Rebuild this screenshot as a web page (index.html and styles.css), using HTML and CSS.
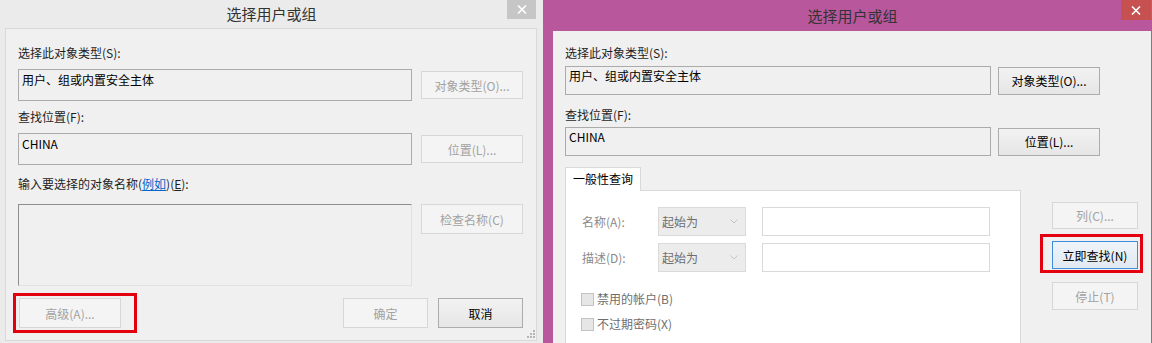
FILE: index.html
```html
<!DOCTYPE html>
<html lang="zh-CN">
<head>
    <meta charset="UTF-8">
    <meta name="viewport" content="width=device-width, initial-scale=1.0">
    <title>选择用户或组</title>
    <link rel="stylesheet" href="styles.css">
</head>
<body>
<div class="desk">
    <!-- inactive dialog -->
    <div class="win win-inactive">
        <div class="titlebar">
            <span class="title">选择用户或组</span>
            <span class="close"><svg width="10" height="9" viewBox="0 0 10 9"><path d="M1 0.5 L9 8.5 M9 0.5 L1 8.5" stroke="#fff" stroke-width="1.6" fill="none"/></svg></span>
        </div>
        <div class="client">
            <div class="label">选择此对象类型(S):</div>
            <div class="row">
                <div class="field">用户、组或内置安全主体</div>
                <button class="btn" disabled>对象类型(O)...</button>
            </div>
            <div class="label gap-8">查找位置(F):</div>
            <div class="row">
                <div class="field">CHINA</div>
                <button class="btn" disabled>位置(L)...</button>
            </div>
            <div class="label gap-11">输入要选择的对象名称(<a class="link" href="#">例如</a>)(<u>E</u>):</div>
            <div class="row row-top gap-12">
                <div class="names"></div>
                <button class="btn btn-tall" disabled>检查名称(C)</button>
            </div>
            <div class="row footer">
                <div class="mark mark-left">
                    <button class="btn btn-adv" disabled>高级(A)...</button>
                </div>
                <div class="spacer"></div>
                <button class="btn btn-sm" disabled>确定</button>
                <button class="btn btn-sm btn-on">取消</button>
            </div>
            <svg class="grip" width="9" height="9" viewBox="0 0 9 9" fill="#b5b5b5">
                <rect x="7" y="1" width="2" height="2"/>
                <rect x="4" y="4" width="2" height="2"/><rect x="7" y="4" width="2" height="2"/>
                <rect x="1" y="7" width="2" height="2"/><rect x="4" y="7" width="2" height="2"/><rect x="7" y="7" width="2" height="2"/>
            </svg>
        </div>
    </div>

    <!-- active dialog -->
    <div class="win win-active">
        <div class="titlebar titlebar-active">
            <span class="title">选择用户或组</span>
            <span class="close close-red"><svg width="10" height="9" viewBox="0 0 10 9"><path d="M1 0.5 L9 8.5 M9 0.5 L1 8.5" stroke="#fff" stroke-width="1.6" fill="none"/></svg></span>
        </div>
        <div class="client client-active">
            <div class="label label-tight">选择此对象类型(S):</div>
            <div class="row">
                <div class="field field-wide">用户、组或内置安全主体</div>
                <button class="btn btn-on">对象类型(O)...</button>
            </div>
            <div class="label gap-12">查找位置(F):</div>
            <div class="row gap-4">
                <div class="field field-wide">CHINA</div>
                <button class="btn btn-on">位置(L)...</button>
            </div>
            <div class="query">
                <div class="tabs">
                    <div class="tab">一般性查询</div>
                    <div class="panel">
                        <div class="qrow">
                            <span class="qlabel">名称(A):</span>
                            <div class="combo">起始为<svg width="8" height="5" viewBox="0 0 8 5"><path d="M0.5 0.5 L4 4 L7.5 0.5" stroke="#c4c4c4" fill="none"/></svg></div>
                            <div class="qinput"></div>
                        </div>
                        <div class="qrow gap-7">
                            <span class="qlabel">描述(D):</span>
                            <div class="combo">起始为<svg width="8" height="5" viewBox="0 0 8 5"><path d="M0.5 0.5 L4 4 L7.5 0.5" stroke="#c4c4c4" fill="none"/></svg></div>
                            <div class="qinput"></div>
                        </div>
                        <div class="check gap-19"><span class="box"></span>禁用的帐户(B)</div>
                        <div class="check gap-9"><span class="box"></span>不过期密码(X)</div>
                    </div>
                </div>
                <div class="side">
                    <button class="btn btn-side" disabled>列(C)...</button>
                    <div class="mark mark-right">
                        <button class="btn btn-side btn-focus">立即查找(N)</button>
                    </div>
                    <button class="btn btn-side btn-stop" disabled>停止(T)</button>
                </div>
            </div>
        </div>
    </div>
</div>
</body>
</html>
```

FILE: styles.css
```css
* {
    box-sizing: border-box;
}
body {
    margin: 0;
    font-family: "Noto Sans CJK SC", "Noto Sans", sans-serif;
    font-size: 12px;
    color: #000;
    background: #f0f0f0;
}
.desk {
    display: flex;
    width: 1152px;
    height: 343px;
    overflow: hidden;
}
.win {
    display: flex;
    flex-direction: column;
    height: 343px;
}
.win-inactive {
    width: 543px;
    background: #ebebeb;
}
.win-active {
    width: 609px;
    background: #b8579b;
}
.titlebar {
    position: relative;
    flex-shrink: 0;
    height: 28px;
    display: flex;
    justify-content: center;
    align-items: center;
}
.titlebar-active {
    height: 31px;
    padding-left: 10px;
}
.title {
    font-size: 15px;
    line-height: 20px;
    color: #333;
}
.close {
    position: absolute;
    top: 0;
    right: 7px;
    width: 29px;
    height: 19px;
    background: #c6c6c6;
    display: flex;
    justify-content: center;
    align-items: center;
}
.close-red {
    right: 1px;
    width: 30px;
    height: 20px;
    background: #c75050;
}

/* left dialog */
.client {
    position: relative;
    flex-shrink: 0;
    margin-left: 5px;
    width: 532px;
    height: 313px;
    border: 1px solid #d9d9d9;
    background: #f0f0f0;
    padding: 16px 13px 0 12px;
}
.label {
    line-height: 16px;
    margin-bottom: 8px;
    color: #1e1e1e;
}
.label-tight {
    margin-bottom: 5px;
}
.gap-4 { margin-top: 4px; }
.gap-7 { margin-top: 7px; }
.gap-8 { margin-top: 8px; }
.gap-9 { margin-top: 9px; }
.gap-11 { margin-top: 11px; }
.gap-12 { margin-top: 12px; }
.gap-19 { margin-top: 19px; }
.label.gap-11 { margin-bottom: 12px; }
.label.gap-12 { margin-bottom: 4px; }
.link {
    color: #0066cc;
}
.row {
    display: flex;
    align-items: center;
    gap: 9px;
}
.row-top {
    align-items: flex-start;
    margin-top: 0;
}
.field {
    width: 394px;
    height: 32px;
    border: 1px solid #ababab;
    background: #f0f0f0;
    padding: 2px 3px;
    line-height: 16px;
}
.field-wide {
    width: 426px;
    height: 29px;
    padding: 1px 3px;
    margin-right: -1px;
}
.names {
    width: 394px;
    height: 82px;
    border: 1px solid;
    border-color: #8e8e8e #e2e2e2 #e2e2e2 #8e8e8e;
    background: #f0f0f0;
}
.btn {
    font-family: inherit;
    font-size: 12px;
    width: 102px;
    height: 28px;
    padding: 0;
    border: 1px solid #d7d7d7;
    background: #f4f4f4;
    color: #a2a2a2;
}
.btn-tall {
    height: 30px;
}
.btn-on {
    border-color: #acacac;
    background: linear-gradient(#f2f2f2, #e6e6e6);
    color: #000;
}
.footer {
    margin-top: 7px;
    gap: 10px;
    margin-left: -5px;
}
.spacer {
    flex: 1;
}
.btn-sm {
    width: 85px;
    height: 30px;
}
.mark {
    border: 3px solid #e3000f;
}
.mark-left {
    padding: 2px 13px 2px 3px;
}
.btn-adv {
    height: 30px;
}
.grip {
    position: absolute;
    right: 1px;
    bottom: 2px;
}

/* right dialog */
.client-active {
    margin-left: 10px;
    width: 598px;
    height: auto;
    flex: 1;
    overflow: hidden;
    border: none;
    padding: 14px 0 0 12px;
}
.client-active .row {
    gap: 8px;
}
.query {
    display: flex;
    margin-top: 11px;
}
.tabs {
    display: flex;
    flex-direction: column;
    align-items: flex-start;
}
.tab {
    position: relative;
    z-index: 1;
    width: 76px;
    height: 24px;
    margin-bottom: -1px;
    border: 1px solid #d9d9d9;
    border-bottom: none;
    background: #fff;
    padding-left: 7px;
    line-height: 22px;
}
.panel {
    width: 456px;
    height: 160px;
    border: 1px solid #d9d9d9;
    background: #fff;
    padding: 16px 30px 0 16px;
}
.qrow {
    display: flex;
    align-items: center;
    height: 29px;
}
.qlabel {
    width: 76px;
    color: #8a8a8a;
}
.combo {
    width: 88px;
    height: 29px;
    border: 1px solid #dadada;
    background: #ececec;
    color: #6e6e6e;
    padding: 0 7px 0 3px;
    display: flex;
    align-items: center;
    justify-content: space-between;
}
.qinput {
    width: 228px;
    height: 29px;
    margin-left: 16px;
    border: 1px solid #d9d9d9;
    background: #fff;
}
.check {
    display: flex;
    align-items: center;
    gap: 3px;
    line-height: 16px;
    color: #6e6e6e;
    margin-left: -1px;
}
.box {
    width: 13px;
    height: 13px;
    border: 1px solid #c2c2c2;
    background: #e6e6e6;
}
.side {
    display: flex;
    flex-direction: column;
    align-items: flex-start;
    padding-top: 35px;
    margin-left: 31px;
}
.btn-side {
    width: 86px;
    height: 27px;
}
.mark-right {
    margin: 5px 0 0 -12px;
    padding: 4px 2px 1px 9px;
}
.btn-focus {
    height: 28px;
    border-color: #3c8de0;
    background: linear-gradient(#eef4fa, #e2e9f1);
    color: #000;
}
.btn-stop {
    height: 28px;
    margin-top: 9px;
}
```
